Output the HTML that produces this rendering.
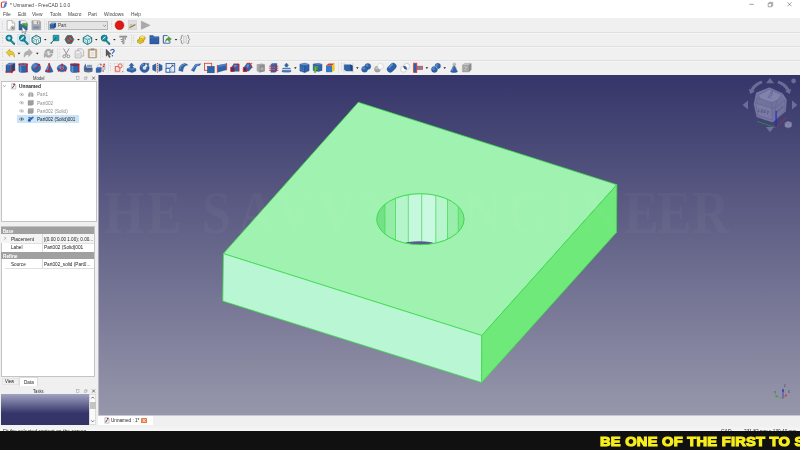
<!DOCTYPE html><html lang="en"><head><meta charset="utf-8"><title>FreeCAD</title><style>
*{box-sizing:border-box;margin:0;padding:0}
html,body{width:800px;height:450px;overflow:hidden;background:#f0f0f0;font-family:"Liberation Sans",sans-serif;font-size:5px;color:#222}
.abs{position:absolute}
#app{position:relative;width:800px;height:450px;overflow:hidden;background:#f0f0f0}
.txt{position:absolute;left:0;top:0;width:800px;height:450px;will-change:transform}
.t{position:absolute;white-space:nowrap;line-height:1;transform-origin:0 50%}
.hl{position:absolute;left:0;width:800px;height:1px;background:#e0e0e0;box-shadow:0 0.7px 0 #f8f8f8}
.grip{position:absolute;width:1px;height:9px;background:repeating-linear-gradient(#d6d6d6 0 0.8px,transparent 0.8px 1.7px)}
.sep{position:absolute;width:0.6px;height:11px;background:#e2e2e2}
</style></head><body><div id="app">
<div class="abs" style="left:0;top:0;width:800px;height:18.2px;background:#fff"></div>
<div class="hl" style="top:32.3px"></div>
<div class="hl" style="top:46.2px"></div>
<div class="hl" style="top:60.2px"></div>
<div class="grip" style="left:45.5px;top:21px"></div>
<div class="grip" style="left:111.2px;top:21px"></div>
<div class="grip" style="left:2px;top:21px"></div>
<div class="grip" style="left:2px;top:35px"></div>
<div class="grip" style="left:133px;top:35px"></div>
<div class="grip" style="left:2px;top:49px"></div>
<div class="grip" style="left:58.5px;top:49px"></div>
<div class="grip" style="left:102px;top:49px"></div>
<div class="grip" style="left:2px;top:63px"></div>
<div class="grip" style="left:110px;top:63px"></div>
<div class="grip" style="left:340.5px;top:63px"></div>
<div class="sep" style="left:43.5px;top:20px"></div>
<div class="sep" style="left:131.2px;top:34px"></div>
<div class="sep" style="left:56.9px;top:48px"></div>
<div class="sep" style="left:100px;top:48px"></div>
<div class="sep" style="left:107.5px;top:62px"></div>
<div class="sep" style="left:338.2px;top:62px"></div>
<div class="abs" style="left:16.9px;top:33.7px;width:13px;height:11px;background:#dce9f5;border:0.4px solid #d2e3f3"></div>
<div class="abs" style="left:48.2px;top:21.2px;width:60px;height:8.8px;background:#e4e4e4;border:0.5px solid #b6b6b6"></div>
<div id="vp" class="abs" style="left:99px;top:75px;width:701px;height:340px;background:linear-gradient(#35356a,#9797ab);overflow:hidden"></div>
<div class="abs" style="left:98px;top:75px;width:1px;height:340px;background:linear-gradient(#35356a,#9797ab);opacity:0.55"></div>
<div class="abs" style="left:98px;top:415px;width:702px;height:1px;background:#9797ab;opacity:0.45"></div>
<div class="abs" style="left:1px;top:81.2px;width:95.8px;height:141.1px;background:#fff;border:0.5px solid #c4c4c4"></div>
<div class="abs" style="left:17px;top:115px;width:61.8px;height:8px;background:#cce4f7"></div>
<div class="abs" style="left:1px;top:226.4px;width:93.6px;height:150.8px;background:#fff;border:0.5px solid #c4c4c4"></div>
<div class="abs" style="left:1.4px;top:226.7px;width:92.9px;height:7.5px;background:#a0a0a0"></div>
<div class="abs" style="left:1.4px;top:251.6px;width:92.9px;height:7.5px;background:#a0a0a0"></div>
<div class="abs" style="left:1.4px;top:234.2px;width:92.9px;height:8.5px;background:#f4f4f4"></div>
<div class="abs" style="left:42.4px;top:234.2px;width:0.5px;height:17.4px;background:#dadada"></div>
<div class="abs" style="left:42.4px;top:259.1px;width:0.5px;height:8.5px;background:#dadada"></div>
<div class="abs" style="left:10px;top:242.5px;width:84px;height:0.5px;background:#e0e0e0"></div>
<div class="abs" style="left:5px;top:267.5px;width:89px;height:0.5px;background:#e0e0e0"></div>
<div class="abs" style="left:1.5px;top:377.8px;width:17.2px;height:7px;background:#f0f0f0;border:0.4px solid #e4e4e4"></div>
<div class="abs" style="left:18.7px;top:377.2px;width:19.3px;height:8.8px;background:#fff;border:0.4px solid #dcdcdc;border-bottom:none"></div>
<div class="abs" style="left:1.1px;top:394px;width:87.8px;height:30.8px;background:linear-gradient(#a2a2c2 0%,#35356a 62%,#333366 100%)"></div>
<div class="abs" style="left:89.4px;top:394px;width:6.8px;height:30.8px;background:#fafafa;border:0.4px solid #dcdcdc"></div>
<div class="abs" style="left:90.2px;top:402px;width:5.4px;height:6.5px;background:#c4c4c4"></div>
<div class="abs" style="left:98px;top:415.5px;width:54.5px;height:9.6px;background:#fff"></div>
<div class="abs" style="left:0;top:425.6px;width:800px;height:6px;background:linear-gradient(#f0f0f0,#f4f4f4 40%,#f6f6f6)"></div>
<div class="abs" style="left:141.3px;top:417.9px;width:5.6px;height:5.2px;background:#e9784a;border-radius:0.6px"></div>
<svg class="abs" style="left:0;top:0" width="800" height="450" viewBox="0 0 800 450">
<defs><clipPath id="vpc"><rect x="98" y="75" width="702" height="340.5"/></clipPath></defs>
<polygon points="358.3,102.3 616.8,184.7 481.8,335.5 223.4,253.6" fill="#9ff2b0" stroke="#3fdc4c" stroke-width="0.8" stroke-linejoin="round"/>
<polygon points="223.4,253.6 481.8,335.5 481.6,382.6 222.8,301.1" fill="#b9f6d3" stroke="#3fdc4c" stroke-width="0.8" stroke-linejoin="round"/>
<polygon points="481.8,335.5 616.8,184.7 616.5,232.3 481.6,382.6" fill="#6fe979" stroke="#3fdc4c" stroke-width="0.8" stroke-linejoin="round"/>
<defs><clipPath id="hc"><ellipse cx="420.4" cy="219.2" rx="43.7" ry="25.5"/></clipPath></defs>
<g clip-path="url(#hc)">
<rect x="376" y="190" width="9.3" height="60" fill="#6fe283"/>
<rect x="385" y="190" width="10.8" height="60" fill="#93eda6"/>
<rect x="395.5" y="190" width="13.1" height="60" fill="#b5f5cc"/>
<rect x="408.3" y="190" width="13.7" height="60" fill="#c5f8dc"/>
<rect x="421.7" y="190" width="14.4" height="60" fill="#c9f9e0"/>
<rect x="435.8" y="190" width="12.0" height="60" fill="#b6f5ce"/>
<rect x="447.5" y="190" width="11.1" height="60" fill="#98eeaa"/>
<rect x="458.3" y="190" width="7.0" height="60" fill="#7fe88d"/>
<line x1="385" y1="190" x2="385" y2="250" stroke="#46d957" stroke-width="0.75"/>
<line x1="395.5" y1="190" x2="395.5" y2="250" stroke="#46d957" stroke-width="0.75"/>
<line x1="408.3" y1="190" x2="408.3" y2="250" stroke="#46d957" stroke-width="0.75"/>
<line x1="421.7" y1="190" x2="421.7" y2="250" stroke="#46d957" stroke-width="0.75"/>
<line x1="435.8" y1="190" x2="435.8" y2="250" stroke="#46d957" stroke-width="0.75"/>
<line x1="447.5" y1="190" x2="447.5" y2="250" stroke="#46d957" stroke-width="0.75"/>
<line x1="458.3" y1="190" x2="458.3" y2="250" stroke="#46d957" stroke-width="0.75"/>
<ellipse cx="419.2" cy="243.6" rx="14.6" ry="2.3" fill="#5a5890"/>
</g>
<ellipse cx="420.4" cy="219.2" rx="43.7" ry="25.5" fill="none" stroke="#3cd84a" stroke-width="1"/>
<g clip-path="url(#vpc)"><text transform="translate(0,232.5) scale(0.85,1)" x="68.2 122.4 172.9 218.8 237.6 280.0 323.6 374.4 425.1 470.6 498.7 546.5 597.2 650.9 683.5 734.1 772.9 814.1" font-family="Liberation Serif,serif" font-weight="bold" font-size="61" fill="#fff" fill-opacity="0.03">THE SAVVY ENGINEER</text></g>
</svg>
<div class="txt"><div class="t" style="left:9.8px;top:2.6px;font-size:5.1px;color:#444;transform:scaleX(0.94)">* Unnamed - FreeCAD 1.0.0</div><div class="t" style="left:3.4px;top:12px;font-size:5.1px;color:#444;transform:scaleX(0.95)">File</div><div class="t" style="left:17.8px;top:12px;font-size:5.1px;color:#444;transform:scaleX(0.95)">Edit</div><div class="t" style="left:32.3px;top:12px;font-size:5.1px;color:#444;transform:scaleX(0.95)">View</div><div class="t" style="left:49.7px;top:12px;font-size:5.1px;color:#444;transform:scaleX(0.95)">Tools</div><div class="t" style="left:67.9px;top:12px;font-size:5.1px;color:#444;transform:scaleX(0.95)">Macro</div><div class="t" style="left:88.2px;top:12px;font-size:5.1px;color:#444;transform:scaleX(0.95)">Part</div><div class="t" style="left:104.1px;top:12px;font-size:5.1px;color:#444;transform:scaleX(0.95)">Windows</div><div class="t" style="left:131.3px;top:12px;font-size:5.1px;color:#444;transform:scaleX(0.95)">Help</div><div class="t" style="left:58px;top:24.2px;font-size:4.6px;color:#3a3a3a;transform:scaleX(0.98)">Part</div><div class="t" style="left:32.7px;top:75.7px;font-size:5px;color:#333;transform:scaleX(0.84)">Model</div><div class="t" style="left:19.4px;top:83.6px;font-size:5px;color:#222;font-weight:bold;transform:scaleX(0.96)">Unnamed</div><div class="t" style="left:36.9px;top:92.05px;font-size:5px;color:#8a8a8a;transform:scaleX(0.92)">Part1</div><div class="t" style="left:36.9px;top:100.8px;font-size:5px;color:#8a8a8a;transform:scaleX(0.92)">Part002</div><div class="t" style="left:36.9px;top:108.55px;font-size:5px;color:#8a8a8a;transform:scaleX(0.92)">Part002 (Solid)</div><div class="t" style="left:36.9px;top:116.8px;font-size:5px;color:#222;transform:scaleX(0.92)">Part002 (Solid)001</div><div class="t" style="left:3.1px;top:229px;font-size:5px;color:#fff;font-weight:bold;transform:scaleX(0.86)">Base</div><div class="t" style="left:3.1px;top:253.9px;font-size:5px;color:#fff;font-weight:bold;transform:scaleX(0.94)">Refine</div><div class="t" style="left:11px;top:236.7px;font-size:5px;color:#222;transform:scaleX(0.975)">Placement</div><div class="t" style="left:11px;top:244.8px;font-size:5px;color:#222;transform:scaleX(0.94)">Label</div><div class="t" style="left:11px;top:261.6px;font-size:5px;color:#222;transform:scaleX(0.93)">Source</div><div class="t" style="left:44px;top:236.7px;font-size:5px;color:#222;transform:scaleX(0.92)">[(0.00 0.00 1.00); 0.00...</div><div class="t" style="left:44px;top:244.8px;font-size:5px;color:#222;transform:scaleX(0.94)">Part002 (Solid)001</div><div class="t" style="left:44px;top:261.6px;font-size:5px;color:#222;transform:scaleX(0.93)">Part002_solid (Part0...</div><div class="t" style="left:5px;top:379.2px;font-size:5px;color:#222;transform:scaleX(0.85)">View</div><div class="t" style="left:23.6px;top:379.6px;font-size:5px;color:#222;transform:scaleX(0.92)">Data</div><div class="t" style="left:33.4px;top:388.6px;font-size:5px;color:#333;transform:scaleX(0.83)">Tasks</div><div class="t" style="left:111px;top:418.2px;font-size:5px;color:#222;transform:scaleX(0.93)">Unnamed : 1*</div><div class="t" style="left:3px;top:429.1px;font-size:5px;color:#222">Fit the selected content on the screen</div><div class="t" style="left:721px;top:429.2px;font-size:5px;color:#222">CAD</div><div class="t" style="left:743.5px;top:429.2px;font-size:5px;color:#222;transform:scaleX(0.95)">231.82 mm x 130.40 mm</div></div>
<svg class="abs" style="left:0;top:0" width="800" height="80" viewBox="0 0 800 80">
<g transform="translate(11,25.2) scale(1.08)"><path d="M-3.6,-4.3h4.6l2.4,2.4v6.2h-7z" fill="#fbfbfb" stroke="#8c8c8c" stroke-width="0.5"/><path d="M1,-4.3v2.4h2.4" fill="#e4e4e4" stroke="#8c8c8c" stroke-width="0.4"/><circle cx="1.6" cy="2.6" r="1.9" fill="#e9e9d8" stroke="#777" stroke-width="0.4"/><path d="M0.3,2.6h2.6M1.6,1.3v2.6M0.7,1.7l1.8,1.8M2.5,1.7l-1.8,1.8" stroke="#4a4a3a" stroke-width="0.35"/></g>
<g transform="translate(23.3,25.2) scale(1.08)"><path d="M-4,-3.8h5l2.6,2.2v6h-7.6z" fill="#3465a4" stroke="#1f4680" stroke-width="0.4"/><path d="M-2.6,-4.2h4.2l2,1.8v1.2h-6.2z" fill="#f4f4f4" stroke="#999" stroke-width="0.3"/><path d="M-2.2,1.2c0.2,-3 2.6,-3.6 4.4,-2.6l0.8,-1.2l0.9,3.6l-3.5,0.1l0.8,-1.1c-1.2,-0.6 -2.6,0 -3.4,1.2z" fill="#4fb04a" stroke="#2c7a2a" stroke-width="0.3"/></g>
<g transform="translate(36.2,25.2) scale(1.08)"><path d="M-4,-4.2h7l1.2,1.2v7.2h-8.2z" fill="#a9a9a9" stroke="#8a8a8a" stroke-width="0.4"/><rect x="-2.4" y="-4" width="4.8" height="3" fill="#e2e2e2"/><rect x="0.6" y="-3.6" width="1.1" height="2.2" fill="#8a8a8a"/><rect x="-2.8" y="0.6" width="5.8" height="3.2" fill="#8f9bb0"/><rect x="-2.2" y="1.6" width="4.6" height="0.8" fill="#5f86c4"/></g>
<g transform="translate(119.5,25.2)"><circle r="4.5" fill="#dc1a12"/><circle r="4.5" fill="none" stroke="#b01008" stroke-width="0.4"/></g>
<g transform="translate(132.5,25.2)"><rect x="-4" y="-4.6" width="8" height="9.2" fill="#dedede" stroke="#bdbdbd" stroke-width="0.4"/><path d="M-2.6,1.6l5,-2.6l0.6,0.9l-5,2.6l-1.2,0.1z" fill="#c58a3a" stroke="#6b5a3a" stroke-width="0.3"/><path d="M-2.8,0.2l2.2,-1.2" stroke="#7aa84a" stroke-width="0.6"/></g>
<g transform="translate(145.7,25.2)"><path d="M-4.5,-4.2l9,4.2l-9,4.2z" fill="#a9a9a9" stroke="#969696" stroke-width="0.3"/></g>
<g transform="translate(52.8,25.6) scale(0.8)"><path d="M-3.6,-1.8l2.6,-1.6h4.6v5.2l-2.4,1.8h-4.8z" fill="#3465a4" stroke="#1f4680" stroke-width="0.4"/><path d="M-3.6,-1.8l2.6,-1.6h4.6l-2.4,1.6z" fill="#6f9bd0"/><path d="M1.2,-1.8l2.4,-1.6v5.2l-2.4,1.8z" fill="#1f4680"/></g>
<path d="M103.2,25l1.4,1.4l1.4,-1.4" fill="none" stroke="#444" stroke-width="0.5"/>
<g transform="translate(10,39.5)"><path d="M0.4,0.6l3.7,3.7" stroke="#0c5965" stroke-width="2" stroke-linecap="round"/><path d="M0.6,0.8l3.4,3.4" stroke="#1ea3b4" stroke-width="1.1" stroke-linecap="round"/><circle cx="-1" cy="-1.4" r="2.7" fill="#1ea3b4" stroke="#0c5965" stroke-width="1.4"/><circle cx="-1" cy="-1.4" r="2.7" fill="none" stroke="#1ea3b4" stroke-width="0.6"/><path d="M-2.6,-1.4h3.2M-1,-3v3.2" stroke="#d8f4f6" stroke-width="0.7"/><circle cx="-1" cy="-1.4" r="0.9" fill="none" stroke="#d8f4f6" stroke-width="0.5"/></g>
<g transform="translate(23.4,39.5)"><path d="M0.4,0.6l3.7,3.7" stroke="#0c5965" stroke-width="2" stroke-linecap="round"/><path d="M0.6,0.8l3.4,3.4" stroke="#1ea3b4" stroke-width="1.1" stroke-linecap="round"/><circle cx="-1" cy="-1.4" r="2.7" fill="#1ea3b4" stroke="#0c5965" stroke-width="1.4"/><circle cx="-1" cy="-1.4" r="2.7" fill="none" stroke="#1ea3b4" stroke-width="0.6"/><path d="M-2.4,-0.2l2.6,-2.4" stroke="#e8f8fa" stroke-width="1.1" stroke-linecap="round"/></g>
<g transform="translate(36.3,39.5)"><path d="M-4.2,-1.8l4.2,-2.4l4.2,2.4v4.4l-4.2,2.4l-4.2,-2.4z" fill="#f2fbfc" stroke="#0c5965" stroke-width="0.9" stroke-linejoin="round"/><path d="M-4.2,-1.8l4.2,-2.4l4.2,2.4v4.4l-4.2,2.4l-4.2,-2.4z" fill="none" stroke="#1ea3b4" stroke-width="0.35"/><path d="M-4.2,-1.8l4.2,2.2l4.2,-2.2M0,0.4v4.6" stroke="#0c5965" stroke-width="0.55" fill="none"/><path d="M-2.4,0.4v2.4M2.4,0.4v2.4M-1.2,-2.4h2.4" stroke="#0c5965" stroke-width="0.6"/></g>
<g transform="translate(55,39.5)"><path d="M-1.8,-4.2h5.6v5.4h-5.6z" fill="#1ea3b4" stroke="#0c5965" stroke-width="0.6"/><path d="M1,-1.4l-4.8,4.8" stroke="#0c5965" stroke-width="0.9"/><path d="M-4.6,3.4l0.9,-0.9l0.9,0.9l-0.9,0.9z" fill="#1ea3b4" stroke="#0c5965" stroke-width="0.4"/><circle cx="1" cy="-1.4" r="0.7" fill="#0c5965"/></g>
<g transform="translate(69.4,39.5)"><path d="M-4.4,0l2.2,-3.9h4.4l2.2,3.9l-2.2,3.9h-4.4z" fill="#1ea3b4" stroke="#0c5965" stroke-width="0.7"/><circle r="2.9" fill="none" stroke="#c22a1a" stroke-width="1.2"/><path d="M-2,-2l4,4" stroke="#c22a1a" stroke-width="1.1"/></g>
<g transform="translate(87.5,39.5)"><path d="M-4.2,-1.8l4.2,-2.4l4.2,2.4v4.4l-4.2,2.4l-4.2,-2.4z" fill="#e6f7f9" stroke="#0c5965" stroke-width="0.9" stroke-linejoin="round"/><path d="M-4.2,-1.8l4.2,-2.4l4.2,2.4v4.4l-4.2,2.4l-4.2,-2.4z" fill="none" stroke="#1ea3b4" stroke-width="0.35"/><path d="M-4.2,-1.8l4.2,2.2l4.2,-2.2M0,0.4v4.6" stroke="#0c5965" stroke-width="0.55" fill="none"/><path d="M-2.6,-0.4l2.4,-1.2l2.4,1.2v2.2l-2.4,1.2l-2.4,-1.2z" fill="none" stroke="#1ea3b4" stroke-width="0.5"/></g>
<g transform="translate(105.2,39.5)"><path d="M0.4,0.6l3.7,3.7" stroke="#0c5965" stroke-width="2" stroke-linecap="round"/><path d="M0.6,0.8l3.4,3.4" stroke="#1ea3b4" stroke-width="1.1" stroke-linecap="round"/><circle cx="-1" cy="-1.4" r="2.7" fill="#1ea3b4" stroke="#0c5965" stroke-width="1.4"/><circle cx="-1" cy="-1.4" r="2.7" fill="none" stroke="#1ea3b4" stroke-width="0.6"/><path d="M-2.4,-0.4l2.4,-2.2" stroke="#e8f8fa" stroke-width="1" stroke-linecap="round"/></g>
<g transform="translate(123.2,39.5)"><path d="M-3.6,-3.6h7.4v1.4h-7.4z" fill="#9a9a9a" stroke="#777" stroke-width="0.3"/><path d="M-0.6,-2.2h1.6v6.6h-1.6z" fill="#a4a4a4" stroke="#777" stroke-width="0.3"/><path d="M-2.6,-0.6h2v1.2h-2zM-2.2,1.4h1.6v1h-1.6z" fill="#8c8c8c"/><path d="M1.6,-2.2h1v3l-1,-1z" fill="#8c8c8c"/></g>
<g transform="translate(141.3,39.5)"><path d="M-3.8,0.6l2,-1v-1.8l2.6,-1.6l3,1.4v2.2l-1.4,0.8v1.8l-3.4,1.8l-2.8,-1.4z" fill="#e6c62a" stroke="#8f7a10" stroke-width="0.5" stroke-linejoin="round"/><path d="M-1.8,-2.2l2.8,1.2l2.8,-1.4M1,-1v1.8l-2.2,1.2l-2.6,-1.4M1,0.8l1.4,0.6" fill="none" stroke="#a68f14" stroke-width="0.4"/><path d="M-1.8,-2.2l2.6,-1.6l3,1.4l-2.8,1.4z" fill="#f6e56a"/></g>
<g transform="translate(154.4,39.5)"><path d="M-4.6,-3.9h3.4l0.9,1.1h4.9v7.2h-9.2z" fill="#2f5fa6" stroke="#1c3f78" stroke-width="0.4"/><path d="M-4.4,-1.8h8.8" stroke="#5b86c4" stroke-width="0.5"/></g>
<g transform="translate(166.9,39.5)"><path d="M-3.6,-3.8h4.2M-3.6,-3.8v7.4h6.6v-2.4" fill="none" stroke="#33558f" stroke-width="1" stroke-linejoin="round"/><path d="M-2.8,-3.2h3.4v1.6h-1.4v4.6h3.2v-1" fill="#f2f4f8" stroke="none"/><path d="M-1.6,2.4c0.2,-2.6 1.4,-3.8 3,-3.9v-1.6l3.2,2.5l-3.2,2.5v-1.5c-1.2,0 -2.2,0.6 -3,2z" fill="#4aa63c" stroke="#2a6e22" stroke-width="0.3"/></g>
<g transform="translate(185,39.5)"><path d="M-2.2,-4.2c-1.4,0 -1.4,0.6 -1.4,2c0,1.2 -0.3,1.8 -1,2.2c0.7,0.4 1,1 1,2.2c0,1.4 0,2 1.4,2" fill="none" stroke="#777" stroke-width="0.9"/><path d="M2.2,-4.2c1.4,0 1.4,0.6 1.4,2c0,1.2 0.3,1.8 1,2.2c-0.7,0.4 -1,1 -1,2.2c0,1.4 0,2 -1.4,2" fill="none" stroke="#777" stroke-width="0.9"/><rect x="-1.6" y="-3.4" width="3.2" height="6.8" fill="#e6e6e6" stroke="#a0a0a0" stroke-width="0.3"/></g>
<path d="M44.0,39.0h2.6l-1.3,1.6z" fill="#222"/>
<path d="M77.2,39.0h2.6l-1.3,1.6z" fill="#222"/>
<path d="M95.0,39.0h2.6l-1.3,1.6z" fill="#222"/>
<path d="M113.10000000000001,39.0h2.6l-1.3,1.6z" fill="#222"/>
<path d="M174.7,39.0h2.6l-1.3,1.6z" fill="#222"/>
<g transform="translate(10.6,53.3)"><path d="M-4.4,-0.8l3.6,-3.4v2c3.4,0 5,2 4.6,6.2c-0.8,-2.2 -2.2,-3 -4.6,-2.8v2z" fill="#ecc92c" stroke="#a58a12" stroke-width="0.45" stroke-linejoin="round"/></g>
<g transform="translate(28,53.3)"><g transform="scale(-1,1)"><path d="M-4.4,-0.8l3.6,-3.4v2c3.4,0 5,2 4.6,6.2c-0.8,-2.2 -2.2,-3 -4.6,-2.8v2z" fill="#b2b2b2" stroke="#929292" stroke-width="0.45" stroke-linejoin="round"/></g></g>
<g transform="translate(48.6,53.3) scale(1.1)"><path d="M-3.6,-0.6c0.4,-2.2 2,-3.4 4,-3.2c1,0.1 1.8,0.6 2.4,1.2l1.2,-1.2v3.6h-3.6l1.2,-1.2c-0.8,-0.8 -2.6,-1 -3.4,0.8z" fill="#acacac" stroke="#8e8e8e" stroke-width="0.3"/><path d="M3.6,0.6c-0.4,2.2 -2,3.4 -4,3.2c-1,-0.1 -1.8,-0.6 -2.4,-1.2l-1.2,1.2v-3.6h3.6l-1.2,1.2c0.8,0.8 2.6,1 3.4,-0.8z" fill="#acacac" stroke="#8e8e8e" stroke-width="0.3"/></g>
<g transform="translate(66.3,53.3)"><path d="M-2.6,-4.4l3.4,6M2.6,-4.4l-3.4,6" stroke="#8e8e8e" stroke-width="0.9" stroke-linecap="round"/><circle cx="-2" cy="3" r="1.4" fill="none" stroke="#808080" stroke-width="0.8"/><circle cx="2" cy="3" r="1.4" fill="none" stroke="#808080" stroke-width="0.8"/></g>
<g transform="translate(79.4,53.3)"><path d="M-1.6,-4.4h4l1.8,1.8v5.4h-5.8z" fill="#ececec" stroke="#8c8c8c" stroke-width="0.5"/><path d="M-4.2,-2.4h4l1.8,1.8v5.2h-5.8z" fill="#f4f4f4" stroke="#848484" stroke-width="0.5"/><path d="M-3.2,0.4h3.6M-3.2,1.6h3.6M-3.2,2.8h3.6" stroke="#a4a4a4" stroke-width="0.45"/></g>
<g transform="translate(92.5,53.3)"><rect x="-4.2" y="-4.2" width="8.4" height="8.8" rx="0.6" fill="#d2b080" stroke="#a07c48" stroke-width="0.45"/><rect x="-2.8" y="-2.8" width="5.6" height="6.6" fill="#f6f6f6" stroke="#a0a0a0" stroke-width="0.3"/><rect x="-1.6" y="-4.8" width="3.2" height="1.6" fill="#8e8e8e"/><path d="M-1.8,-0.8h3.6M-1.8,0.6h3.6M-1.8,2h3.6" stroke="#b0b0b0" stroke-width="0.4"/></g>
<g transform="translate(110.2,53.3)"><path d="M-4.2,-4.2v7.2l1.8,-1.6l1.4,3l1.2,-0.6l-1.4,-2.8h2.4z" fill="#5c5c5c" stroke="#333" stroke-width="0.3"/><path d="M0.4,-2.6c0.2,-1.6 3.4,-1.8 3.6,0c0.1,1.4 -1.8,1.4 -1.8,3" fill="none" stroke="#2c57a0" stroke-width="1.1"/><circle cx="2.2" cy="2.4" r="0.7" fill="#2c57a0"/></g>
<path d="M17.7,52.8h2.6l-1.3,1.6z" fill="#222"/>
<path d="M36.0,52.8h2.6l-1.3,1.6z" fill="#222"/>
<g transform="translate(10.4,67.8)"><path d="M-4.4,-2.6l3,-2h5.8v6.6l-3,2.4h-5.8z" fill="#2f62a8" stroke="#1c437e" stroke-width="0.4"/><path d="M-4.4,-2.6l3,-2h5.8l-3,2z" fill="#5f8fd2"/><path d="M1.4,-2.6l3,-2v6.6l-3,2.4z" fill="#1c437e"/><path d="M1.4,-2.6v7M-4.4,4.4h5.8l3,-2.4" fill="none" stroke="#e01414" stroke-width="0.7"/><circle cx="1.4" cy="-2.6" r="0.8" fill="#e01414"/><circle cx="-4.2" cy="4.2" r="0.8" fill="#e01414"/><circle cx="1.4" cy="4.6" r="0.8" fill="#e01414"/><circle cx="4.2" cy="2.2" r="0.8" fill="#e01414"/></g>
<g transform="translate(23.1,67.8)"><path d="M-4.2,-3.2v6.4c0,2 8.4,2 8.4,0v-6.4z" fill="#2f62a8" stroke="#1c437e" stroke-width="0.4"/><path d="M-2.6,-2.6v7" stroke="#5f8fd2" stroke-width="1.6"/><ellipse cx="0" cy="-3.2" rx="4.2" ry="1.3" fill="#5f8fd2" stroke="#1c437e" stroke-width="0.3"/><path d="M-4.2,-3.6h8.4M4,-3.4v7.6" stroke="#e01414" stroke-width="0.8"/><circle cx="-4" cy="-3.6" r="0.8" fill="#e01414"/><circle cx="0" cy="-3.6" r="0.8" fill="#e01414"/><circle cx="4" cy="-3.6" r="0.8" fill="#e01414"/><circle cx="4" cy="4" r="0.8" fill="#e01414"/></g>
<g transform="translate(36.1,67.8)"><circle r="4.6" fill="#2f62a8" stroke="#1c437e" stroke-width="0.4"/><circle cx="-1.4" cy="-1.6" r="2.4" fill="#5f8fd2" opacity="0.7"/><path d="M0,0.2l3.2,-3.4" stroke="#e01414" stroke-width="0.8"/><circle cx="0" cy="0.2" r="0.9" fill="#e01414"/><circle cx="3.2" cy="-3.2" r="0.9" fill="#e01414"/></g>
<g transform="translate(49.2,67.8)"><path d="M0,-4.6l3.8,8c0,1.6 -7.6,1.6 -7.6,0z" fill="#2f62a8" stroke="#1c437e" stroke-width="0.4"/><path d="M-0.2,-4l-2,7.6" stroke="#5f8fd2" stroke-width="1.2"/><path d="M0,-4.4v7.6h-3.4" stroke="#e01414" stroke-width="0.8" fill="none"/><circle cx="0" cy="-3.8" r="0.8" fill="#e01414"/><circle cx="0" cy="3.2" r="0.8" fill="#e01414"/><circle cx="-3.2" cy="3.2" r="0.8" fill="#e01414"/></g>
<g transform="translate(62,67.8)"><ellipse cx="0" cy="0.4" rx="4.8" ry="3.6" fill="#2f62a8" stroke="#1c437e" stroke-width="0.4"/><ellipse cx="-1" cy="-1" rx="3" ry="1.6" fill="#5f8fd2" opacity="0.8"/><ellipse cx="0" cy="0.6" rx="1.5" ry="0.9" fill="#e8e8ee"/><path d="M0,-3.6v4.2l-3.8,2.6M0,0.6l3.8,2.6" stroke="#e01414" stroke-width="0.8" fill="none"/><circle cx="0" cy="-3.4" r="0.8" fill="#e01414"/><circle cx="-3.6" cy="3" r="0.8" fill="#e01414"/><circle cx="3.6" cy="3" r="0.8" fill="#e01414"/><circle cx="0" cy="0.6" r="0.8" fill="#e01414"/></g>
<g transform="translate(74.8,67.8)"><path d="M-4.2,-3.2v6.4c0,2 8.4,2 8.4,0v-6.4z" fill="#2f62a8" stroke="#1c437e" stroke-width="0.4"/><path d="M-2.4,-2.6v7" stroke="#5f8fd2" stroke-width="1.8"/><ellipse cx="0" cy="-3.2" rx="4.2" ry="1.2" fill="#1c437e"/><path d="M-4.2,-3.6h8.4M4,-3.4v7.6" stroke="#e01414" stroke-width="0.8"/><circle cx="-3.8" cy="-3.6" r="0.8" fill="#e01414"/><circle cx="-0.6" cy="-3.6" r="0.8" fill="#e01414"/><circle cx="1.4" cy="-3.6" r="0.8" fill="#e01414"/><circle cx="4" cy="-3.4" r="0.8" fill="#e01414"/><circle cx="4" cy="4" r="0.8" fill="#e01414"/></g>
<g transform="translate(88.1,67.8)"><path d="M-2.8,-4.4l1.6,4.4h-3.2z" fill="#3f65a0"/><path d="M-1,-3h5v2.4h-5z" fill="#8c9cb4"/><path d="M-4.2,-0.2h8.6v2h-8.6z" fill="#3d5f96"/><ellipse cx="0.2" cy="3" rx="4.4" ry="1.7" fill="#5e6f8c"/><path d="M-4.2,1.8h8.6" stroke="#2c4674" stroke-width="0.6"/></g>
<g transform="translate(100.7,67.8)"><path d="M-4.6,0.4l1.4,-1h3.8v4.4l-1.2,1h-4z" fill="#2f62a8" stroke="#1c437e" stroke-width="0.3"/><path d="M-4.6,0.4l1.4,-1h3.8l-1.2,1z" fill="#5f8fd2"/><path d="M1.8,-2.4h2.6v4.2h-2.6z" fill="#c9c9c9" stroke="#8c8c8c" stroke-width="0.3"/><path d="M-3.4,-1.8c1,-1.6 2.4,-2.4 4,-2.6" fill="none" stroke="#9a9a9a" stroke-width="0.5"/><circle cx="0.2" cy="-3" r="0.8" fill="#e01414"/><circle cx="3.4" cy="-3.4" r="0.8" fill="#e01414"/><circle cx="3" cy="-1.4" r="0.7" fill="#e01414"/><circle cx="2.4" cy="3.2" r="0.8" fill="#e01414"/></g>
<g transform="translate(118.7,67.8)"><rect x="-4.5" y="-4.6" width="9" height="9.2" fill="#f3f3f3" stroke="#c8c8c8" stroke-width="0.4"/><rect x="-3.4" y="-1.2" width="4.6" height="4.6" fill="#fbe4e0" stroke="#e2483a" stroke-width="0.8"/><circle cx="1.4" cy="-1.8" r="2.1" fill="#fbe4e0" fill-opacity="0.6" stroke="#e2483a" stroke-width="0.8"/><path d="M3.2,3.2h1.2v1.2z" fill="#555"/></g>
<g transform="translate(131.5,67.8)"><path d="M-4.4,1l3,-1.4h2.4l3.4,1.2v2.4l-3.6,1.6l-5.2,-1.6z" fill="#2f62a8" stroke="#1c437e" stroke-width="0.4"/><path d="M-4.4,1l3,-1.4h2.4l3.4,1.2l-3.6,1.4z" fill="#5f8fd2"/><path d="M0,-4.8l2.4,2.6h-1.3v2.6h-2.2v-2.6h-1.3z" fill="#2f62a8" stroke="#1c437e" stroke-width="0.4"/></g>
<g transform="translate(144.4,67.8)"><path d="M1.2,-4.6a4.7,4.7 0 1 0 3.4,3l-2.6,0.8a2,2 0 1 1 -1.6,-1.2z" fill="#2f62a8" stroke="#1c437e" stroke-width="0.4"/><path d="M-3.4,-1.2a3.6,3.6 0 0 1 3,-2.4" stroke="#5f8fd2" stroke-width="1.2" fill="none"/><path d="M1.6,-4.4l3,0.2l-0.8,3z" fill="#2f62a8" stroke="#1c437e" stroke-width="0.3"/><circle cx="0.2" cy="0.4" r="1.2" fill="#d8dde6"/></g>
<g transform="translate(157.4,67.8)"><path d="M-4.7,-2.4l3.2,-1.6v7.6l-3.2,-1.4z" fill="#2f62a8" stroke="#1c437e" stroke-width="0.4"/><path d="M4.7,-2.4l-3.2,-1.6v7.6l3.2,-1.4z" fill="#2f62a8" stroke="#1c437e" stroke-width="0.4"/><path d="M0,-4.8v9.6" stroke="#c21818" stroke-width="0.9" stroke-dasharray="1.2 0.9"/></g>
<g transform="translate(170.4,67.8)"><rect x="-4.3" y="-4.3" width="8.6" height="8.6" fill="#e8eef8" stroke="#2f62a8" stroke-width="0.9"/><rect x="-4.3" y="0.6" width="3.7" height="3.7" fill="#fff" stroke="#2f62a8" stroke-width="0.8"/><path d="M-0.2,0.2l2.6,-2.6" stroke="#1c437e" stroke-width="0.9"/><path d="M0.8,-3h2.2v2.2z" fill="#1c437e"/><path d="M0.6,0.4v3.4M-3.8,-0.2h3.4" stroke="#5f8fd2" stroke-width="0.5"/></g>
<g transform="translate(183.2,67.8)"><path d="M-4.4,2.6c0.2,-4 2.6,-6.6 6.6,-6.8l2.4,1.4c-3.2,0.4 -4.6,2.4 -5,6.6z" fill="#2f62a8" stroke="#1c437e" stroke-width="0.4"/><path d="M-3.4,1.8c0.4,-3 2.4,-5 5.2,-5.4" stroke="#5f8fd2" stroke-width="1.1" fill="none"/></g>
<g transform="translate(195.9,67.8)"><path d="M-4.6,2.4l4,-5.8l5.4,-0.6l-1.2,1.6l-2.8,0.6l-2.6,5.6z" fill="#2f62a8" stroke="#1c437e" stroke-width="0.4"/><path d="M-3.4,1.8l3.4,-4.6l3,-0.4" stroke="#5f8fd2" stroke-width="1.1" fill="none"/></g>
<g transform="translate(209.3,67.8)"><rect x="-4.9" y="-4.5" width="7.3" height="7" fill="#f7ecea" stroke="#d93a2c" stroke-width="0.8"/><rect x="-1.8" y="-1.4" width="6.7" height="6.4" fill="#2f62a8" stroke="#1c437e" stroke-width="0.5"/></g>
<g transform="translate(222,67.8)"><path d="M-4.6,-2.6l9.2,-1.8v6.6l-9.2,2.4z" fill="#2f62a8"/><path d="M-4.6,-2.6l9.2,-1.8v2l-9.2,2z" fill="#5f8fd2" opacity="0.6"/><path d="M-4.6,-2.8v7.6M4.6,-4.6v7" stroke="#e03a2a" stroke-width="0.9"/></g>
<g transform="translate(235,67.8)"><path d="M-4,-0.4l2.6,-3.4h5.4v7.4h-4.4l-3.6,0.6z" fill="#2f62a8"/><path d="M-1.4,-3.8h5.4v7.4" fill="none" stroke="#e01414" stroke-width="0.9"/><path d="M-1,-3l3.6,0.6l-3.4,2.6z" fill="#5f8fd2"/><rect x="-4.2" y="-0.4" width="3.4" height="3.8" fill="#1c437e" stroke="#e01414" stroke-width="0.9"/></g>
<g transform="translate(247.7,67.8)"><path d="M-4.4,0l3.4,-4.4l3.4,-0.2l2.2,4.4l-3.4,3.6h-2.2z" fill="#2f62a8"/><path d="M-1,-4.4l3.4,-0.2l2.2,4.4" fill="none" stroke="#e01414" stroke-width="0.9"/><path d="M-0.6,-3.6l2.4,0.2l-1.6,3.6h-1.6z" fill="#5f8fd2"/><rect x="-4.4" y="0" width="3.4" height="3.6" fill="#1c437e" stroke="#e01414" stroke-width="0.9"/><circle cx="4" cy="-4.2" r="0.6" fill="#e01414"/></g>
<g transform="translate(260.7,67.8)"><path d="M-4,-3.6l5.4,-0.8l2.6,1.2v6.6l-5.2,1.2l-2.8,-1.4z" fill="#a6a6a6"/><path d="M-1.2,-2.4l5.2,-0.8v6.6l-5.2,1.2z" fill="#8e8e8e"/><circle cx="1.4" cy="1" r="1.5" fill="#b0b0b0"/></g>
<g transform="translate(273.7,67.8)"><path d="M-3,-3.6l2,-1h4.4v7.8l-2,1.4h-4.4z" fill="#2f62a8"/><path d="M-3,-3.6l2,-1h4.4l-2,1z" fill="#5f8fd2"/><path d="M-4.6,-1.6h9.2M-4.6,0.4h9.2M-4.6,2.6h9.2" stroke="#e62020" stroke-width="0.8"/><path d="M-3,-0.6h4.4M-3,1.5h4.4" stroke="#5f8fd2" stroke-width="0.7"/></g>
<g transform="translate(286.5,67.8)"><path d="M0,-4.8l2.2,2.4h-1.2v1.6h-2v-1.6h-1.2z" fill="#2f62a8" stroke="#1c437e" stroke-width="0.3"/><path d="M-3.4,0.2h6.8l0.8,1h-8.4z" fill="#5f8fd2" stroke="#1c437e" stroke-width="0.3"/><path d="M-4.4,2.6h8.8v1.4h-8.8z" fill="#2f62a8" stroke="#1c437e" stroke-width="0.3"/><path d="M-3.2,4.6h6.4" stroke="#5f8fd2" stroke-width="0.5"/></g>
<g transform="translate(304.5,67.8)"><path d="M-4.6,-3.6l5,-1l4.2,1.2v6.4l-4.4,1.8l-4.8,-1.6z" fill="#2f62a8" stroke="#1c437e" stroke-width="0.4"/><path d="M-4.6,-3.6l5,-1l4.2,1.2l-4.4,1z" fill="#5f8fd2"/><path d="M0.2,-2.4v7.2" stroke="#1c437e" stroke-width="0.5"/><path d="M-3.4,-1.6v3.8l2.6,0.8v-3.8" fill="none" stroke="#5f8fd2" stroke-width="0.5"/></g>
<g transform="translate(317.6,67.8)"><path d="M-4.4,-3.8l5.4,-0.6l3.4,0.8v6.2l-3.4,1l-5.4,-0.8z" fill="#2f62a8" stroke="#1c437e" stroke-width="0.4"/><path d="M-4.4,-3.8l5.4,-0.6l3.4,0.8l-3.4,0.6z" fill="#5f8fd2"/><path d="M-3.2,-1.6h4v1.3h-2.4v1h2v1.2h-2v2.6l-1.6,0.5z" fill="#6cc23a" stroke="#3a7a1c" stroke-width="0.3"/></g>
<g transform="translate(330.6,67.8)"><path d="M-4.6,-2.4h6v6.8h-6z" fill="#3a78c4"/><path d="M-4.6,-2.4l2.6,-2h6l-2.6,2z" fill="#d83a2a"/><path d="M1.4,-2.4l2.6,-2v6.8l-2.6,2z" fill="#ecc81c"/></g>
<g transform="translate(348.4,67.8)"><path d="M-4.4,-3.4h6.4l2.4,1.4v5.4h-6.4l-2.4,-1.4z" fill="#2f62a8"/><path d="M2,-3.4l2.4,1.4v5.4l-2.4,-1.4z" fill="#1c437e"/><path d="M-4.6,-4.2v8.6M4.6,-4.2v8.6" stroke="#b8b8b8" stroke-width="0.5"/><path d="M-4.6,-4.2l1.4,0.8M4.6,-4.2l-1.4,0.8M-4.6,4.4l1.4,-0.8M4.6,4.4l-1.4,-0.8" stroke="#b8b8b8" stroke-width="0.5"/></g>
<g transform="translate(366.2,67.8)"><circle cx="1.6" cy="-1.4" r="3" fill="#2f62a8" stroke="#1c437e" stroke-width="0.35"/><circle cx="0.70" cy="-2.30" r="1.50" fill="#5f8fd2" opacity="0.75"/><circle cx="-1.6" cy="1.4" r="3" fill="#2f62a8" stroke="#1c437e" stroke-width="0.35"/><circle cx="-2.50" cy="0.50" r="1.50" fill="#5f8fd2" opacity="0.75"/></g>
<g transform="translate(379,67.8)"><circle cx="-1.6" cy="1.4" r="3" fill="#a2a2a2" stroke="#8a8a8a" stroke-width="0.35"/><circle cx="-2.50" cy="0.50" r="1.50" fill="#c4c4c4" opacity="0.75"/><circle cx="1.6" cy="-1.4" r="3" fill="#f4f4f4" stroke="#bdbdbd" stroke-width="0.35"/><circle cx="0.70" cy="-2.30" r="1.50" fill="#ffffff" opacity="0.75"/></g>
<g transform="translate(391.8,67.8)"><path d="M-3.8,-0.8l3,-3a3,3 0 0 1 4.4,4.4l-3,3a3,3 0 0 1 -4.4,-4.4z" fill="#2f62a8" stroke="#1c437e" stroke-width="0.35"/><path d="M-2.6,-0.4l3,-3" stroke="#5f8fd2" stroke-width="1.6" stroke-linecap="round"/></g>
<g transform="translate(405.1,67.8)"><circle cx="-1.6" cy="1.4" r="3" fill="#fbfbfb" stroke="#9a9a9a" stroke-width="0.4"/><circle cx="1.6" cy="-1.4" r="3" fill="#fbfbfb" stroke="#9a9a9a" stroke-width="0.4"/><path d="M-1.5,-1.7a3.2,3.2 0 0 1 3.2,3.2a3.2,3.2 0 0 1 -3.2,-3.2z" fill="#2f62a8" stroke="#1c437e" stroke-width="0.4"/></g>
<g transform="translate(418,67.8)"><rect x="-4.4" y="-4.6" width="3.2" height="9.2" fill="#2f62a8" stroke="#e03a2a" stroke-width="0.8"/><rect x="-1.2" y="-1.5" width="5.6" height="3" fill="#5f8fd2" stroke="#e03a2a" stroke-width="0.8"/></g>
<g transform="translate(436,67.8)"><circle cx="1.8" cy="-1.8" r="2.7" fill="#2f62a8" stroke="#1c437e" stroke-width="0.35"/><circle cx="0.99" cy="-2.61" r="1.35" fill="#5f8fd2" opacity="0.75"/><circle cx="-1.6" cy="1.6" r="3" fill="#2f62a8" stroke="#1c437e" stroke-width="0.35"/><circle cx="-2.50" cy="0.70" r="1.50" fill="#5f8fd2" opacity="0.75"/><path d="M-0.6,-1.2a2.4,2.4 0 0 1 1.8,1.8" fill="none" stroke="#dfe6f2" stroke-width="0.7"/></g>
<g transform="translate(454,67.8)"><path d="M0,-3l3.4,6.6c0,1.4 -6.8,1.4 -6.8,0z" fill="#2f62a8" stroke="#1c437e" stroke-width="0.4"/><path d="M-0.4,-2l-1.6,5.4" stroke="#5f8fd2" stroke-width="1.1"/><circle cx="0.3" cy="-3.4" r="1.5" fill="#b9b9b9" stroke="#8a8a8a" stroke-width="0.3"/><circle cx="1.8" cy="-0.4" r="0.6" fill="#d8781c"/></g>
<g transform="translate(466.8,67.8)"><path d="M-4.4,-2.8l2.4,-1.6h6.4v6.4l-2.4,2.2h-6.4z" fill="#a4a4a4" stroke="#8a8a8a" stroke-width="0.3"/><path d="M-4.4,-2.8l2.4,-1.6h6.4l-2.4,1.6z" fill="#c2c2c2"/><path d="M2,-2.8l2.4,-1.6v6.4l-2.4,2.2z" fill="#8c8c8c"/><path d="M-3.2,-1.2h1.8v1.6h1.6v-1.6h1M-3.2,2h2.4v1.4" fill="none" stroke="#d2d2d2" stroke-width="0.5"/></g>
<path d="M294.09999999999997,67.3h2.6l-1.3,1.6z" fill="#222"/>
<path d="M356.09999999999997,67.3h2.6l-1.3,1.6z" fill="#222"/>
<path d="M425.59999999999997,67.3h2.6l-1.3,1.6z" fill="#222"/>
<path d="M443.4,67.3h2.6l-1.3,1.6z" fill="#222"/>
<path d="M749.4,4.3h4.4" stroke="#444" stroke-width="0.5"/>
<path d="M768.2,3.4h3.4v3.4h-3.4zM769.3,3.4v-1h3.4v3.4h-1.1" fill="none" stroke="#444" stroke-width="0.45"/>
<path d="M787.5,2.3l4,4M791.5,2.3l-4,4" stroke="#444" stroke-width="0.5"/>
<path d="M22.2,26.6v6.4l1.5,-1.4l1.1,2.5l1,-0.45l-1.1,-2.4h2z" fill="#fff" stroke="#444" stroke-width="0.45" stroke-linejoin="round"/>
</svg>
<svg class="abs" style="left:0;top:0" width="800" height="450" viewBox="0 0 800 450">
<path d="M6.6,2h-3.6c-1,0 -1.6,0.6 -1.6,1.6v3.6" fill="none" stroke="#e0453a" stroke-width="1.1" stroke-linecap="round"/>
<path d="M2,7.4h2.2" stroke="#e0453a" stroke-width="0.8" stroke-linecap="round"/>
<path d="M3.8,7l1.2,-4h2l-0.4,1.2h-1l-0.3,1h1l-0.4,1.2h-1l-0.2,0.8z" fill="#2a6fe0" stroke="#2a6fe0" stroke-width="0.4" stroke-linejoin="round"/>
<rect x="76.2" y="76.69999999999999" width="2.8" height="2.8" fill="none" stroke="#8a8a8a" stroke-width="0.4"/>
<path d="M84.3,77.6h2v2h-2zM85.1,77.6v-0.9h2v2h-0.8" fill="none" stroke="#8a8a8a" stroke-width="0.4"/>
<path d="M92.2,76.6l2.8,3M95,76.6l-2.8,3" stroke="#3c3c3c" stroke-width="0.65"/>
<rect x="76.2" y="389.6" width="2.8" height="2.8" fill="none" stroke="#8a8a8a" stroke-width="0.4"/>
<path d="M84.3,390.5h2v2h-2zM85.1,390.5v-0.9h2v2h-0.8" fill="none" stroke="#8a8a8a" stroke-width="0.4"/>
<path d="M92.2,389.5l2.8,3M95,389.5l-2.8,3" stroke="#3c3c3c" stroke-width="0.65"/>
<path d="M3.2,85.3l1.2,1.3l1.2,-1.3" fill="none" stroke="#444" stroke-width="0.5"/>
<path d="M11.6,83.6h2.8l1.4,1.2v4.2h-4.2z" fill="#f4f4f4" stroke="#8a8a8a" stroke-width="0.4"/>
<circle cx="14.2" cy="84.6" r="1" fill="#d8281c"/><path d="M12.2,88.2l1.8,-2.6" stroke="#2a4f9a" stroke-width="1"/>
<path d="M19.2,94.5c1.2,-1.6 3.6,-1.6 4.8,0c-1.2,1.6 -3.6,1.6 -4.8,0z" fill="none" stroke="#9a9a9a" stroke-width="0.45"/><circle cx="21.6" cy="94.5" r="0.75" fill="#9a9a9a"/><path d="M20,92.9l3.2,3.2" stroke="#9a9a9a" stroke-width="0.4"/>
<path d="M19.2,102.7c1.2,-1.6 3.6,-1.6 4.8,0c-1.2,1.6 -3.6,1.6 -4.8,0z" fill="none" stroke="#9a9a9a" stroke-width="0.45"/><circle cx="21.6" cy="102.7" r="0.75" fill="#9a9a9a"/><path d="M20,101.10000000000001l3.2,3.2" stroke="#9a9a9a" stroke-width="0.4"/>
<path d="M19.2,110.9c1.2,-1.6 3.6,-1.6 4.8,0c-1.2,1.6 -3.6,1.6 -4.8,0z" fill="none" stroke="#9a9a9a" stroke-width="0.45"/><circle cx="21.6" cy="110.9" r="0.75" fill="#9a9a9a"/><path d="M20,109.30000000000001l3.2,3.2" stroke="#9a9a9a" stroke-width="0.4"/>
<path d="M19.2,119.1c1.2,-1.6 3.6,-1.6 4.8,0c-1.2,1.6 -3.6,1.6 -4.8,0z" fill="none" stroke="#333" stroke-width="0.45"/><circle cx="21.6" cy="119.1" r="0.75" fill="#333"/>
<path d="M28.4,96.4v-2.4l1,-1.6h1v4zM33.2,96.4v-2.4l-1,-1.6h-0.8v4z" fill="#a8a8a8" stroke="#7f7f7f" stroke-width="0.3"/>
<path d="M28,101.10000000000001l1,-0.8h4.4v4l-1,1h-4.4z" fill="#9e9e9e" stroke="#7c7c7c" stroke-width="0.3"/><path d="M28,101.10000000000001l1,-0.8h4.4l-1,0.8z" fill="#c4c4c4"/>
<path d="M28,109.30000000000001l1,-0.8h4.4v4l-1,1h-4.4z" fill="#9e9e9e" stroke="#7c7c7c" stroke-width="0.3"/><path d="M28,109.30000000000001l1,-0.8h4.4l-1,0.8z" fill="#c4c4c4"/>
<circle cx="29.4" cy="120.3" r="1.5" fill="#2a5aa8"/><circle cx="31.2" cy="118.5" r="1.3" fill="#2a5aa8"/><circle cx="29.2" cy="117.69999999999999" r="0.9" fill="#3b6fc0"/><circle cx="32.8" cy="117.5" r="0.9" fill="#3b6fc0"/>
<path d="M4.4,236.8l1.3,1.4l-1.3,1.4" fill="none" stroke="#555" stroke-width="0.5"/>
<path d="M91.3,398.4l1.4,-1.5l1.4,1.5" fill="none" stroke="#333" stroke-width="0.7"/>
<path d="M91.3,420.4l1.4,1.5l1.4,-1.5" fill="none" stroke="#333" stroke-width="0.7"/>
<path d="M104.8,417.6h3l1.4,1.2v4.4h-4.4z" fill="#f0f0f0" stroke="#8a8a8a" stroke-width="0.4"/>
<circle cx="107.8" cy="418.6" r="0.9" fill="#d8281c"/><path d="M105.6,422.2l1.8,-2.6" stroke="#2a4f9a" stroke-width="1"/>
<path d="M142.6,419l3,3M145.6,419l-3,3" stroke="#fff" stroke-width="0.8"/>
</svg>
<svg class="abs" style="left:0;top:0" width="800" height="450" viewBox="0 0 800 450">
<g fill="#8a8ab0" fill-opacity="0.62">
<path d="M770,78l4,5.2h-8z"/>
<path d="M770,132.2l4,-5.2h-8z"/>
<path d="M742.6,105l5.4,-4.6v9.2z"/>
<path d="M797.4,105l-5.4,-4.6v9.2z"/>
<circle cx="793.6" cy="81" r="2.4"/>
<path d="M750.4,89.6c2.2,-4.4 6.2,-7.6 11.2,-9l1,2.6c-4.2,1.4 -7.4,4 -9.2,7.6l1.4,0.6l-4.6,2.6l-1.4,-5z"/>
<path d="M789.6,89.6c-2.2,-4.4 -6.2,-7.6 -11.2,-9l-1,2.6c4.2,1.4 7.4,4 9.2,7.6l-1.4,0.6l4.6,2.6l1.4,-5z"/>
</g>
<path d="M756.7,93.1L769.4,88.2L782.2,94L786.1,99.8L785.2,111L772.4,121.6L757.2,116.6L754.4,104.2Z" fill="#7c7ca6" fill-opacity="0.86" stroke="#7c7ca6" stroke-opacity="0.86" stroke-width="1.4" stroke-linejoin="round"/>
<path d="M758.3,95.3L769.4,89.2L781.7,94.8L777.2,100.3L771.7,102.6L760.6,98.7Z" fill="#8282ac" stroke="#5c5c8a" stroke-width="0.4" stroke-linejoin="round"/>
<path d="M755.6,103.1L771.7,108.1L772.2,119.8L757.8,115.3Z" fill="#7a7aa4" stroke="#5c5c8a" stroke-width="0.4" stroke-linejoin="round"/>
<path d="M775,108.1L785,100.3L785,110.3L775.6,119.2Z" fill="#74749e" stroke="#5c5c8a" stroke-width="0.4" stroke-linejoin="round"/>
<path d="M755.6,103.1L757.2,98.4L760.6,98.7M771.7,108.1L771.7,102.6M775,108.1L777.2,100.3M771.7,108.1L775,108.1" fill="none" stroke="#5c5c8a" stroke-width="0.4"/>
<text x="757.6" y="111.4" font-family="Liberation Sans,sans-serif" font-size="4.7" font-weight="bold" fill="#55557f" transform="rotate(17 757.6 111.4)" textLength="11.6" lengthAdjust="spacingAndGlyphs">LEFT</text>
<text x="767" y="98" font-family="Liberation Sans,sans-serif" font-size="4.2" font-weight="bold" fill="#62628e" transform="rotate(-62 769.5 96)">TOP</text>
<text x="777" y="113.4" font-family="Liberation Sans,sans-serif" font-size="3.4" font-weight="bold" fill="#5e5e8a" transform="rotate(-40 777 113.4)">REAR</text>
<path d="M784.8,122.8l3.2,-1.6l3.8,1.2v4l-3.4,1.8l-3.6,-1.4z" fill="#8a8ab0" stroke="#5d5d8c" stroke-width="0.4"/><path d="M784.8,122.8l3.6,1.2l3.4,-1.6M788.4,124v4.2" fill="none" stroke="#5d5d8c" stroke-width="0.4"/>
<path d="M776.1,127.2v-16.1" stroke="#2626cc" stroke-width="1.1"/>
<path d="M775.8,127.4l-18.8,-6" stroke="#2f9a3a" stroke-width="0.7"/>
<path d="M776.1,127.6l10.2,-10.3" stroke="#b8304a" stroke-width="0.7"/>
<path d="M783,398.4v-7" stroke="#2a2ac0" stroke-width="0.7"/><path d="M783,388.2l1.1,3.4h-2.2z" fill="#2222b4"/>
<path d="M783,398.4l-5.6,-1.8" stroke="#4aa63a" stroke-width="0.6"/><path d="M774.4,395.6l3.4,-0.2l-0.7,2.1z" fill="#2fa02f"/>
<path d="M783,398.4l2.6,-2.8" stroke="#c84040" stroke-width="0.6"/><path d="M787,394.2l-0.6,2.6l-1.8,-1.7z" fill="#d03030"/>
<text x="783.9" y="387.4" font-family="Liberation Sans,sans-serif" font-size="2.6" fill="#333">Z</text>
<text x="774.2" y="393.6" font-family="Liberation Sans,sans-serif" font-size="2.6" fill="#333">Y</text>
<text x="788" y="392.6" font-family="Liberation Sans,sans-serif" font-size="2.6" fill="#333">X</text>
</svg>
<div class="abs" style="left:0;top:431.3px;width:800px;height:19px;background:#101010"></div>
<div class="txt" style="z-index:5"><div class="t" style="left:600.3px;top:434.55px;font-size:13.6px;color:#f8ee1c;font-weight:bold;transform:scaleX(1.08);-webkit-text-stroke:1.1px #f8ee1c;word-spacing:0.1px;letter-spacing:0.2px">BE ONE OF THE FIRST TO SUBSCRIBE</div></div>
</div></body></html>
